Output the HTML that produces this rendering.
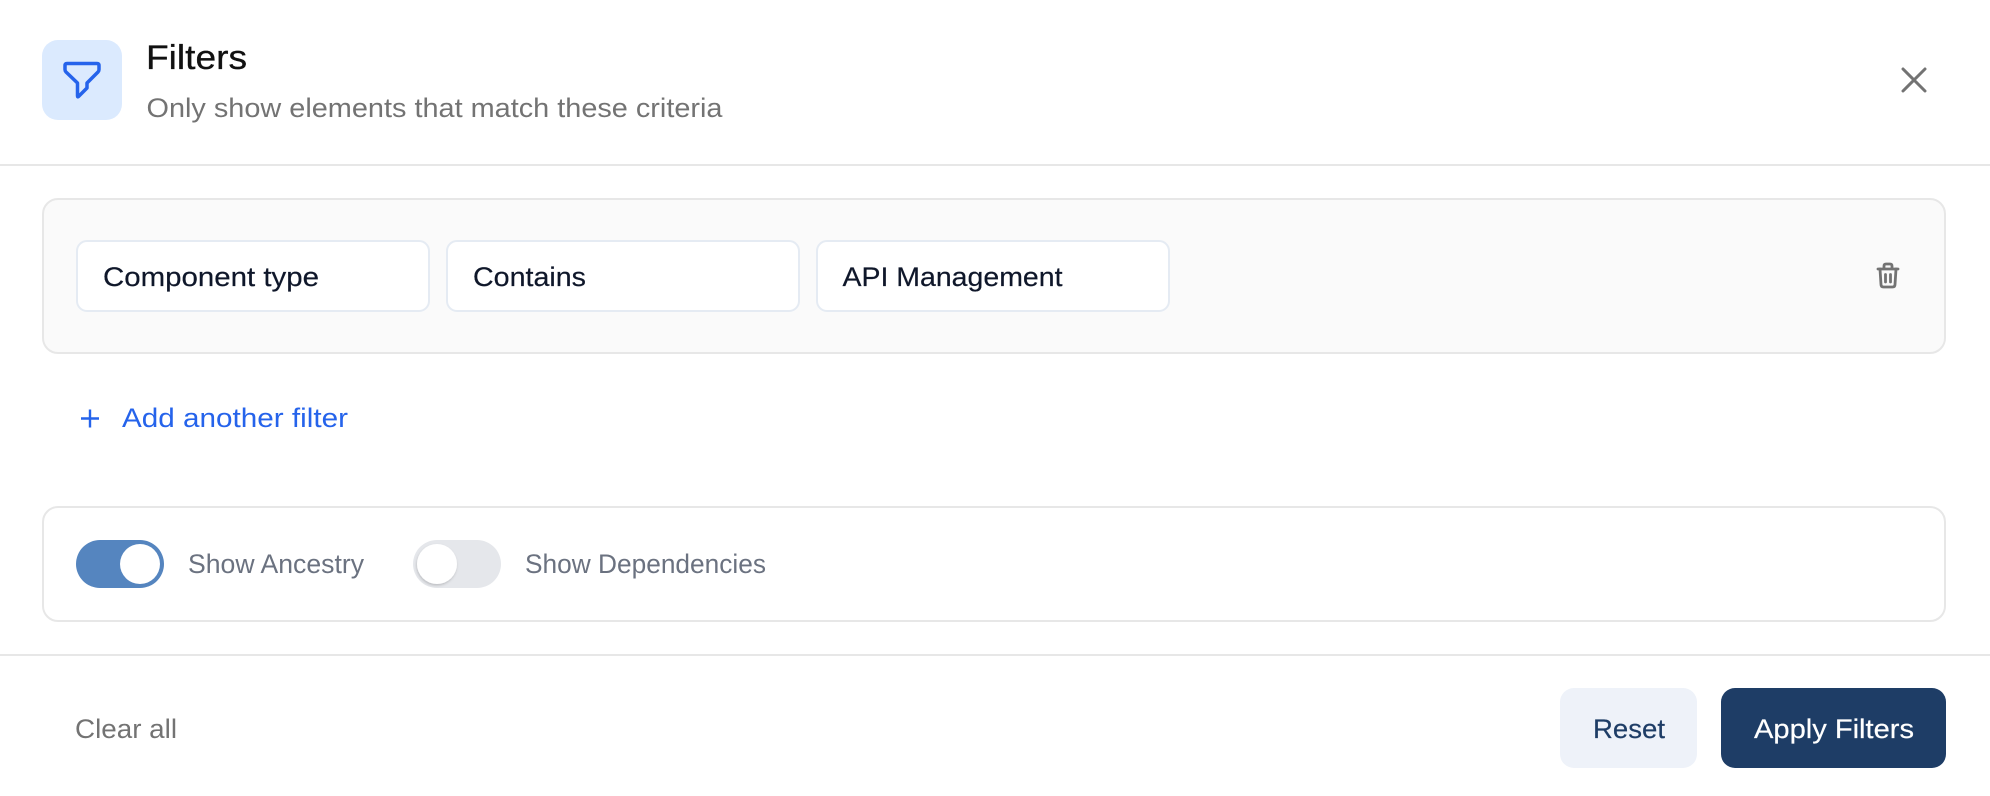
<!DOCTYPE html>
<html><head><meta charset="utf-8"><title>Filters</title>
<style>
html,body{margin:0;padding:0;background:#fff;width:1990px;height:796px;overflow:hidden}
svg{display:block}
text{font-family:"Liberation Sans",sans-serif;font-size:26.5px;white-space:pre}
</style></head><body>
<svg width="1990" height="796" viewBox="0 0 1990 796" xmlns="http://www.w3.org/2000/svg">
<defs><filter id="s" x="-30%" y="-30%" width="160%" height="160%"><feDropShadow dx="-0.5" dy="1.5" stdDeviation="1.2" flood-color="#000" flood-opacity=".18"/></filter></defs>
<rect width="1990" height="796" fill="#fff"/>
<rect x="42" y="40" width="80" height="80" rx="16" fill="#dbeafe"/>
<path d="M67 63.500H97Q99 63.500 99 65.500V69.500Q99 71 98 72L87 83V88L78.500 96.500Q77.500 97.300 77.500 96V83L66 72Q65 71 65 69.500V65.500Q65 63.500 67 63.500Z" fill="none" stroke="#2563eb" stroke-width="3.500" stroke-linejoin="round"/>
<text x="146" y="69" style="font-size:34px" fill="#111111" stroke="#111111" stroke-width=".3" textLength="101" lengthAdjust="spacingAndGlyphs">Filters</text>
<text x="146.500" y="117" fill="#737373" textLength="576" lengthAdjust="spacingAndGlyphs">Only show elements that match these criteria</text>
<path d="M1903 69L1925 91M1925 69L1903 91" stroke="#737373" stroke-width="3" stroke-linecap="round" fill="none"/>
<rect x="0" y="164" width="1990" height="2" fill="#e7e7e7"/>

<rect x="43" y="199" width="1902" height="154" rx="15" fill="#fafafa" stroke="#e7e7e7" stroke-width="2"/>
<rect x="77" y="241" width="352" height="70" rx="10" fill="#fff" stroke="#e5ebf3" stroke-width="2"/>
<rect x="447" y="241" width="352" height="70" rx="10" fill="#fff" stroke="#e5ebf3" stroke-width="2"/>
<rect x="817" y="241" width="352" height="70" rx="10" fill="#fff" stroke="#e5ebf3" stroke-width="2"/>
<text x="103" y="286" fill="#0f172a" stroke="#0f172a" stroke-width=".2" textLength="216" lengthAdjust="spacingAndGlyphs">Component type</text>
<text x="473" y="286" fill="#0f172a" stroke="#0f172a" stroke-width=".2" textLength="113" lengthAdjust="spacingAndGlyphs">Contains</text>
<text x="842.500" y="286" fill="#0f172a" stroke="#0f172a" stroke-width=".2" textLength="220" lengthAdjust="spacingAndGlyphs">API Management</text>
<g fill="none" stroke="#737373" stroke-width="2.800" stroke-linecap="round" stroke-linejoin="round">
<path d="M1878 269H1898"/>
<path d="M1880 269L1881 284.500Q1881 287 1883.500 287H1892.500Q1895 287 1895 284.500L1896 269"/>
<path d="M1884 268.500V266Q1884 264 1886 264H1890Q1892 264 1892 266V268.500"/>
<path d="M1885.500 274.500V282M1890.500 274.500V282"/>
</g>

<path d="M81 418.500H99M90 409.500V427.500" stroke="#2563eb" stroke-width="2.400" fill="none"/>
<text x="122" y="427" fill="#2563eb" textLength="226" lengthAdjust="spacingAndGlyphs">Add another filter</text>

<rect x="43" y="507" width="1902" height="114" rx="15" fill="#fff" stroke="#e7e7e7" stroke-width="2"/>
<rect x="76" y="540" width="88" height="48" rx="24" fill="#5585bf"/>
<circle cx="140" cy="564" r="20" fill="#fff"/>
<text x="188" y="573" fill="#6b7280" textLength="176" lengthAdjust="spacingAndGlyphs">Show Ancestry</text>
<rect x="413" y="540" width="88" height="48" rx="24" fill="#e5e7eb"/>
<circle cx="437" cy="564" r="20" fill="#fff" filter="url(#s)"/>
<text x="525" y="573" fill="#6b7280" textLength="241" lengthAdjust="spacingAndGlyphs">Show Dependencies</text>

<rect x="0" y="654" width="1990" height="2" fill="#e7e7e7"/>
<text x="75" y="738" fill="#737373" textLength="102" lengthAdjust="spacingAndGlyphs">Clear all</text>
<rect x="1560" y="688" width="137" height="80" rx="14" fill="#eef2f9"/>
<text x="1593" y="738" fill="#1e3d66" stroke="#1e3d66" stroke-width=".2" textLength="72" lengthAdjust="spacingAndGlyphs">Reset</text>
<rect x="1721" y="688" width="225" height="80" rx="14" fill="#1e3d66"/>
<text x="1754" y="738" fill="#ffffff" stroke="#ffffff" stroke-width=".2" textLength="160" lengthAdjust="spacingAndGlyphs">Apply Filters</text>
</svg>
</body></html>
